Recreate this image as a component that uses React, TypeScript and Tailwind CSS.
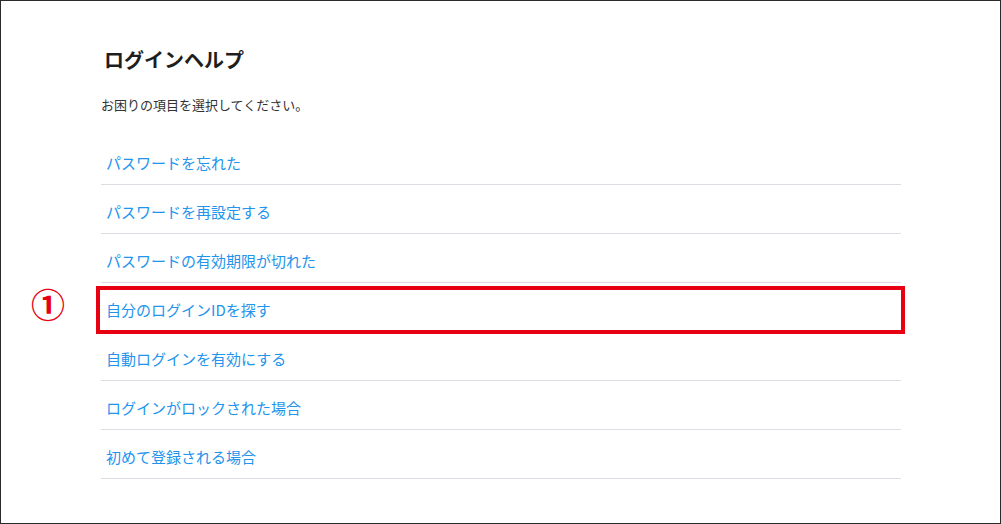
import React from "react";

const links = [
  "パスワードを忘れた",
  "パスワードを再設定する",
  "パスワードの有効期限が切れた",
  "自分のログインIDを探す",
  "自動ログインを有効にする",
  "ログインがロックされた場合",
  "初めて登録される場合",
];

const App = () => {
  return (
    <div
      className="w-[1001px] h-[524px] border border-[#2b2b2b] bg-white overflow-hidden"
      style={{ fontFamily: '"Noto Sans CJK JP", "Noto Sans", sans-serif' }}
    >
      <div className="ml-[100px] w-[800px] pt-[45px]">
        {/* heading */}
        <h1 className="pl-[3px] text-[20px] leading-[28px] font-bold text-[#1e1e1e]">
          ログインヘルプ
        </h1>
        <p className="mt-[22px] text-[13px] leading-[18px] text-[#333]">
          お困りの項目を選択してください。
        </p>

        {/* help links */}
        <ul className="mt-[22px]">
          {links.map((label, i) => (
            <li
              key={label}
              className="relative h-[49px] border-b border-[#dcdde2] pt-[16px] pl-[5px]"
            >
              <a href="#" className="block h-[22px] text-[15px] leading-[22px] text-[#2394ec]">
                {label}
              </a>
              {i === 3 && (
                <>
                  <span className="absolute left-[-5px] right-[-4px] top-[3px] bottom-[-3px] border-4 border-[#e60012] pointer-events-none" />
                  <span className="absolute left-[-70px] top-[2px] text-[34px] leading-[38px] font-bold text-[#e60012]">
                    ①
                  </span>
                </>
              )}
            </li>
          ))}
        </ul>
      </div>
    </div>
  );
};

export default App;
